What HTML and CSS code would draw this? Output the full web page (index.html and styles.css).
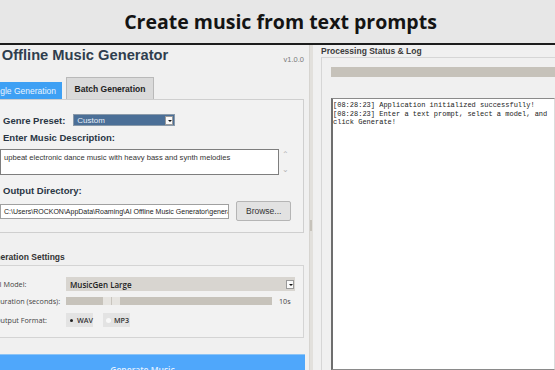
FILE: index.html
```html
<!DOCTYPE html>
<html lang="en">
<head>
  <meta charset="UTF-8">
  <meta name="viewport" content="width=device-width,initial-scale=1.0">
  <title>Create music from text prompts</title>
  <link rel="stylesheet" href="styles.css">
</head>
<body>

  <header class="banner">
    <h1>Create music from text prompts</h1>
  </header>

  <main class="app">
    <!-- left: generator form -->
    <section class="left">
      <div class="app-head">
        <h2>AI Offline Music Generator</h2>
        <span class="ver">v1.0.0</span>
      </div>

      <div class="tabs">
        <div class="tab active">Single Generation</div>
        <div class="tab">Batch Generation</div>
      </div>

      <div class="tab-panel">
        <div class="row genre">
          <span class="lbl">Genre Preset:</span>
          <div class="combo sel"><span>Custom</span><i class="arrow"></i></div>
        </div>

        <span class="lbl desc-lbl">Enter Music Description:</span>
        <div class="row desc">
          <div class="textarea">upbeat electronic dance music with heavy bass and synth melodies</div>
          <div class="vscroll"><span>&#8963;</span><span>&#8964;</span></div>
        </div>

        <span class="lbl out-lbl">Output Directory:</span>
        <div class="row outdir">
          <div class="entry">C:\Users\ROCKON\AppData\Roaming\AI Offline Music Generator\generated</div>
          <button class="browse">Browse...</button>
        </div>
      </div>

      <div class="settings-title">Generation Settings</div>
      <div class="settings">
        <div class="srow">
          <span class="slbl">AI Model:</span>
          <div class="combo model"><span>MusicGen Large</span><i class="arrow"></i></div>
        </div>
        <div class="srow">
          <span class="slbl">Duration (seconds):</span>
          <div class="slider"><div class="thumb"></div></div>
          <span class="sval">10s</span>
        </div>
        <div class="srow">
          <span class="slbl">Output Format:</span>
          <div class="radios">
            <span class="radio on"><b></b>WAV</span>
            <span class="radio"><b></b>MP3</span>
          </div>
        </div>
      </div>

      <button class="generate">Generate Music</button>
    </section>

    <div class="sash"><i></i></div>

    <!-- right: status + log -->
    <section class="right">
      <div class="log-title">Processing Status &amp; Log</div>
      <div class="log-frame">
        <div class="progress"></div>
        <pre class="log">[08:28:23] Application initialized successfully!
[08:28:23] Enter a text prompt, select a model, and
click Generate!</pre>
      </div>
    </section>
  </main>

</body>
</html>
```

FILE: styles.css
```css
*{box-sizing:border-box;margin:0;padding:0}
html,body{width:555px;height:370px;overflow:hidden}
body{
  background:#f0f0f0;
  font-family:"Liberation Sans",Arial,sans-serif;
  color:#222;
}
/* banner */
.banner{
  height:45px;
  background:#e7e7e7;
  border-bottom:2px solid #1c1c1c;
  display:flex;
  justify-content:center;
  align-items:center;
}
.banner h1{
  font-family:"Open Sans",sans-serif;
  font-size:19.5px;
  font-weight:700;
  color:#141414;
  padding-left:6px;
}
/* app */
.app{
  display:flex;
  height:325px;
  overflow:hidden;
}
.left{
  flex:none;
  width:325px;
  margin-left:-20px;
  display:flex;
  flex-direction:column;
}
.left > *{flex:none}
.app-head{
  height:32px;
  display:flex;
  justify-content:space-between;
  align-items:flex-start;
  padding:0 1px 0 3px;
}
.app-head h2{
  font-size:14.7px;
  line-height:20px;
  font-weight:700;
  color:#2f3e4e;
}
.ver{
  font-size:7.5px;
  color:#7a7a7a;
  margin-top:10px;
}
/* tabs */
.tabs{
  display:flex;
  align-items:flex-end;
  gap:4px;
  height:22px;
}
.tab{
  font-size:8.5px;
  font-weight:700;
  display:flex;
  align-items:center;
  justify-content:center;
}
.tab.active{
  width:82px;
  height:17px;
  background:#3ea0f4;
  color:#e9f4ff;
  font-weight:400;
  padding-left:2px;
}
.tab:not(.active){
  width:88px;
  height:22px;
  background:#dadada;
  border:1px solid #b9b9b9;
  border-bottom:none;
  color:#222;
  padding-top:1px;
}
.tab-panel{
  height:134px;
  margin-left:10px;
  margin-right:1px;
  border:1px solid #cfcfcf;
  background:#f2f2f2;
  padding:12px 12px 0 9px;
  display:flex;
  flex-direction:column;
}
.tab-panel > *{flex:none}
.row{display:flex;align-items:center}
.lbl{
  font-size:9.5px;
  font-weight:700;
  color:#2a3644;
  padding-left:3px;
}
.genre{gap:8px;height:14px;margin-top:1px}
.combo{
  display:flex;
  align-items:center;
  justify-content:space-between;
  font-size:8px;
}
.combo.sel{
  width:102px;
  height:12px;
  background:#4b6f97;
  color:#e6eef7;
  padding:0 1px 0 3px;
  border:1px solid #8a9aaa;
}
.arrow{
  width:8px;
  height:9px;
  background:#fafafa;
  border:1px solid #9a9a9a;
  position:relative;
}
.arrow::after{
  content:"";
  position:absolute;
  left:1.5px;top:3px;
  border-left:2px solid transparent;
  border-right:2px solid transparent;
  border-top:2.5px solid #111;
}
.desc-lbl{margin-top:5px;line-height:12px}
.desc{margin-top:5px;align-items:stretch}
.textarea{
  width:283px;
  height:26px;
  background:#fff;
  border:1px solid #7e7e7e;
  font-size:7.6px;
  padding:3px 3px;
  color:#333;
}
.vscroll{
  width:12px;
  display:flex;
  flex-direction:column;
  justify-content:space-between;
  align-items:center;
  color:#b4b4b4;
  font-size:8px;
  line-height:10px;
  padding:1px 0 0;
}
.out-lbl{margin-top:10px;line-height:12px}
.outdir{margin-top:4px;gap:7px}
.entry{
  width:231px;
  height:15px;
  background:#fff;
  border:1px solid #a0a0a0;
  font-size:7px;
  line-height:13px;
  padding-left:3px;
  white-space:nowrap;
  overflow:hidden;
}
.browse{
  width:55px;
  height:20px;
  background:#e2e2e2;
  border:1px solid #b5b5b5;
  border-radius:2px;
  font-family:"Liberation Sans",Arial,sans-serif;
  font-size:8.5px;
  color:#333;
}
/* generation settings */
.settings-title{
  margin-top:18px;
  padding-left:4px;
  font-size:8.5px;
  font-weight:700;
  line-height:12px;
  color:#333;
}
.settings{
  height:73px;
  margin:2px 1px 0 8px;
  border:1px solid #d4d4d4;
  background:#f2f2f2;
  padding:11px 0 0 6px;
  display:flex;
  flex-direction:column;
  gap:3px;
}
.srow{
  display:flex;
  align-items:center;
  height:14px;
  font-family:"Open Sans",sans-serif;
  font-size:7.2px;
  color:#444;
}
.slbl{width:71px;flex:none}
.combo.model{
  width:229px;
  height:14px;
  background:#d8d5d0;
  color:#222;
  font-weight:600;
  padding:0 1px 0 4px;
}
.slider{
  width:206px;
  height:8px;
  background:#c7c3bb;
  position:relative;
}
.thumb{
  position:absolute;
  left:37px;top:0;
  width:17px;height:8px;
  background:linear-gradient(90deg,#e6e4e0 0 45%,#c9c5be 45% 55%,#e6e4e0 55%);
}
.sval{margin-left:7px}
.srow:nth-child(3){margin-top:2px}
.radios{display:flex;gap:10px}
.radio{
  width:27px;
  height:14px;
  background:#e3e3e3;
  display:flex;
  align-items:center;
  gap:3px;
  padding-left:3px;
  font-weight:600;
  color:#333;
}
.radio b{
  width:5px;height:5px;
  border-radius:50%;
  background:#f8f8f8;
}
.radio.on b{background:#222;width:3px;height:3px;margin:0 1px}
.generate{
  margin-top:16px;
  height:26px;
  background:#4fa7fb;
  border:none;
  border-top:1px solid #8cc4f6;
  color:#e3f1ff;
  font-family:"Open Sans",sans-serif;
  font-size:8.5px;
  font-weight:600;
  padding-top:3px;
}
/* sash */
.sash{
  flex:none;
  width:11px;
  display:flex;
  justify-content:center;
  padding-left:1px;
}
.sash i{
  width:4px;
  background:#e2e0dc;
  border-left:1px solid #d6d4d0;
  position:relative;
}
.sash i::after{
  content:"";
  position:absolute;
  left:0;top:175px;
  width:2px;height:11px;
  background:#c6c2ba;
}
/* right pane */
.right{
  flex:1;
  display:flex;
  flex-direction:column;
  padding-left:5px;
}
.log-title{
  font-size:8.5px;
  font-weight:700;
  color:#3c3c3c;
  line-height:12px;
  height:12px;
}
.log-frame{
  flex:1;
  border:1px solid #d6d6d6;
  border-right:none;
  border-bottom:none;
  padding:9px 0 0 9px;
  display:flex;
  flex-direction:column;
}
.progress{
  height:10px;
  background:#c6c2ba;
}
.log{
  flex:1;
  margin-top:21px;
  background:#fff;
  border:1px solid #8a8a8a;
  border-left:2px solid #6e6e6e;
  border-right:1px solid #dcdcdc;
  font-family:"Liberation Mono","Courier New",monospace;
  font-size:7px;
  line-height:8.5px;
  padding:2px 0;
  color:#222;
  white-space:pre;
}
```
